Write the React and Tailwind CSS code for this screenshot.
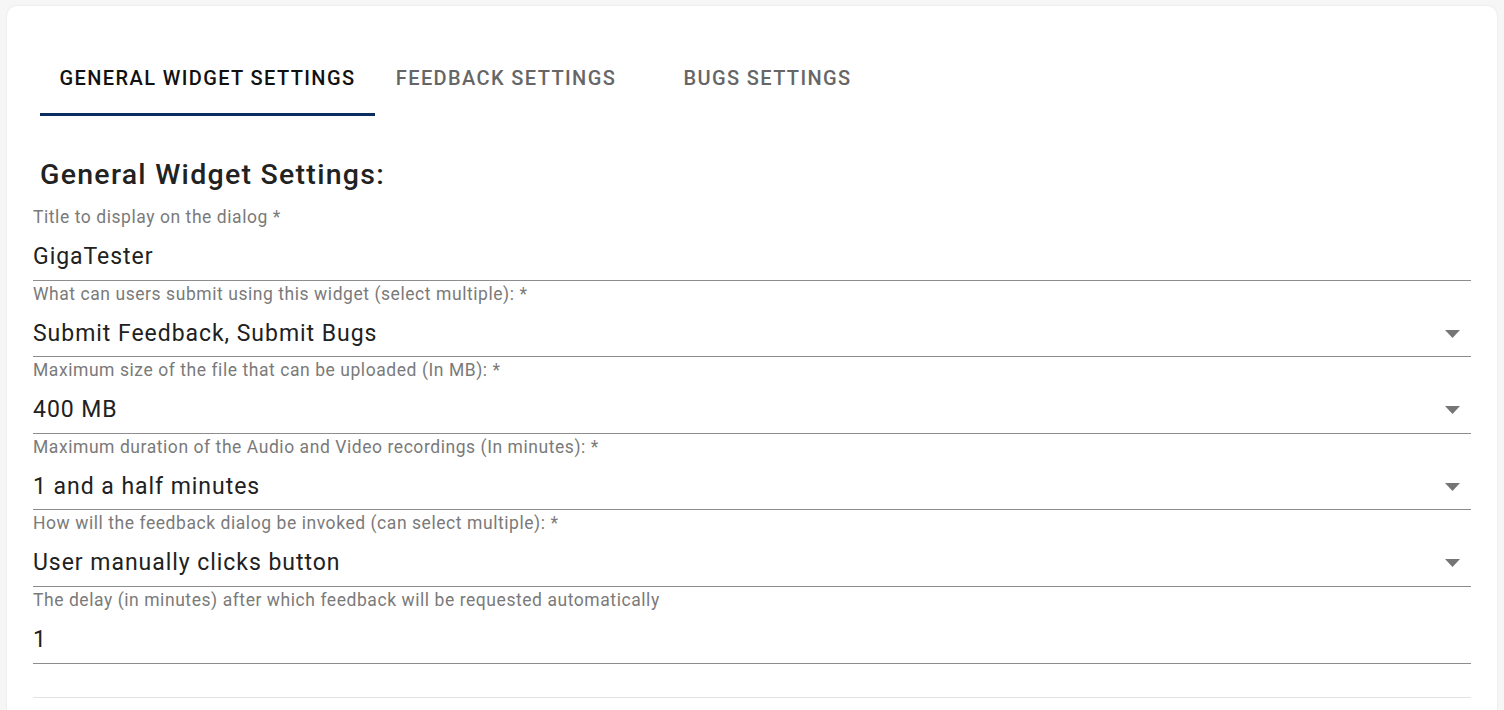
import React, { useState } from "react";

const fields = [
  { label: "Title to display on the dialog *", value: "GigaTester", select: false },
  { label: "What can users submit using this widget (select multiple): *", value: "Submit Feedback, Submit Bugs", select: true },
  { label: "Maximum size of the file that can be uploaded (In MB): *", value: "400 MB", select: true },
  { label: "Maximum duration of the Audio and Video recordings (In minutes): *", value: "1 and a half minutes", select: true },
  { label: "How will the feedback dialog be invoked (can select multiple): *", value: "User manually clicks button", select: true },
  { label: "The delay (in minutes) after which feedback will be requested automatically", value: "1", select: false },
];

const tabs = [
  { name: "GENERAL WIDGET SETTINGS", width: "w-[335px]" },
  { name: "FEEDBACK SETTINGS", width: "w-[262px]" },
  { name: "BUGS SETTINGS", width: "w-[261px]" },
];

function ArrowDropDown() {
  return (
    <svg width="15" height="8" viewBox="0 0 15 8" className="shrink-0 mr-[11px]">
      <path d="M0 0h15L7.5 8z" fill="#757575" />
    </svg>
  );
}

function Field({ label, value, select }) {
  return (
    <div className="border-b border-[#8d8d8d]">
      <div className="h-[24px] pt-[1px] text-[17.5px] tracking-[0.56px] leading-[24px] text-[#7a7a7a] whitespace-nowrap">
        {label}
      </div>
      <div className="h-[51.6px] pt-[14px] flex items-start justify-between">
        <span className="text-[23px] tracking-[0.96px] leading-[30px] text-[#212121]">{value}</span>
        {select && (
          <div className="h-[30px] flex items-center">
            <ArrowDropDown />
          </div>
        )}
      </div>
    </div>
  );
}

export default function App() {
  const [active, setActive] = useState(0);

  return (
    <div className="min-h-screen bg-[#f6f6f6] pt-[6px] px-[7px] font-['Roboto',sans-serif] overflow-hidden h-[710px]">
      <div className="bg-white rounded-[10px] shadow-[0_0_3px_rgba(0,0,0,0.08)] px-[26px] pt-[34px] min-h-[760px]">
        <div className="flex ml-[7px]">
          {tabs.map((t, i) => (
            <button
              key={t.name}
              onClick={() => setActive(i)}
              className={`${t.width} h-[76px] pt-[2px] flex items-center justify-center text-[20px] font-medium tracking-[1.39px] border-b-[3px] ${
                i === active
                  ? "text-[#111] border-[#0c2d5f]"
                  : "text-[#666] border-transparent"
              }`}
            >
              {t.name}
            </button>
          ))}
        </div>

        <h2 className="ml-[7px] mt-[42px] text-[28.5px] tracking-[1.27px] leading-[34px] font-medium text-[#222]">
          General Widget Settings:
        </h2>

        <div className="mt-[12px]">
          {fields.map((f) => (
            <Field key={f.label} {...f} />
          ))}
          <div className="h-[34px] border-b border-[#e2e2e2]" />
        </div>
      </div>
    </div>
  );
}
